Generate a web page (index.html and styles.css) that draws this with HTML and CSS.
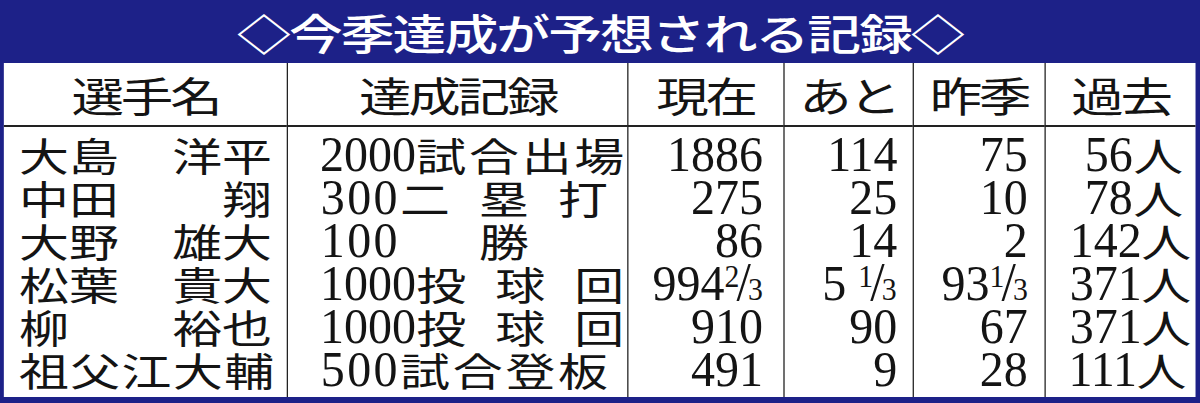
FILE: index.html
```html
<!DOCTYPE html>
<html lang="ja">
<head>
<meta charset="utf-8">
<title>今季達成が予想される記録</title>
<link rel="stylesheet" href="styles.css">
</head>
<body>
<div class="sheet">
  <div class="title">◇今季達成が予想される記録◇</div>
  <table class="tbl">
    <colgroup>
      <col class="c1"><col class="c2"><col class="c3"><col class="c4"><col class="c5"><col class="c6">
    </colgroup>
    <thead>
      <tr><th>選手名</th><th>達成記録</th><th>現在</th><th>あと</th><th>昨季</th><th>過去</th></tr>
    </thead>
    <tbody>
      <tr>
        <td><div class="nm"><span>大島</span><span>洋平</span></div></td>
        <td class="rec"><span class="n">2000</span><span class="slot"><span>試</span><span>合</span><span>出</span><span>場</span></span></td>
        <td class="num now"><span class="n">1886</span></td>
        <td class="num rest"><span class="n">114</span></td>
        <td class="num last"><span class="n">75</span></td>
        <td class="num past"><span class="n">56</span>人</td>
      </tr>
      <tr>
        <td><div class="nm"><span>中田</span><span>翔</span></div></td>
        <td class="rec"><span class="n w3">300</span><span class="slot"><span>二</span><span>塁</span><span>打</span></span></td>
        <td class="num now"><span class="n">275</span></td>
        <td class="num rest"><span class="n">25</span></td>
        <td class="num last"><span class="n">10</span></td>
        <td class="num past"><span class="n">78</span>人</td>
      </tr>
      <tr>
        <td><div class="nm"><span>大野</span><span>雄大</span></div></td>
        <td class="rec"><span class="n w3">100</span><span class="slot mid"><span>勝</span></span></td>
        <td class="num now"><span class="n">86</span></td>
        <td class="num rest"><span class="n">14</span></td>
        <td class="num last"><span class="n">2</span></td>
        <td class="num past"><span class="n">142</span>人</td>
      </tr>
      <tr>
        <td><div class="nm"><span>松葉</span><span>貴大</span></div></td>
        <td class="rec"><span class="n">1000</span><span class="slot"><span>投</span><span>球</span><span>回</span></span></td>
        <td class="num now"><span class="n frn">994<span class="fr"><span class="fu">2</span><span class="fs">/</span><span class="fd">3</span></span></span></td>
        <td class="num rest"><span class="n frn">5 <span class="fr"><span class="fu">1</span><span class="fs">/</span><span class="fd">3</span></span></span></td>
        <td class="num last"><span class="n frn">93<span class="fr"><span class="fu">1</span><span class="fs">/</span><span class="fd">3</span></span></span></td>
        <td class="num past"><span class="n">371</span>人</td>
      </tr>
      <tr>
        <td><div class="nm"><span>柳</span><span>裕也</span></div></td>
        <td class="rec"><span class="n">1000</span><span class="slot"><span>投</span><span>球</span><span>回</span></span></td>
        <td class="num now"><span class="n">910</span></td>
        <td class="num rest"><span class="n">90</span></td>
        <td class="num last"><span class="n">67</span></td>
        <td class="num past"><span class="n">371</span>人</td>
      </tr>
      <tr>
        <td><div class="nm"><span class="full">祖父江大輔</span></div></td>
        <td class="rec"><span class="n w3">500</span><span class="slot"><span>試</span><span>合</span><span>登</span><span>板</span></span></td>
        <td class="num now"><span class="n">491</span></td>
        <td class="num rest"><span class="n">9</span></td>
        <td class="num last"><span class="n">28</span></td>
        <td class="num past"><span class="n">111</span>人</td>
      </tr>
    </tbody>
  </table>
</div>
</body>
</html>
```
FILE: styles.css
```css
html, body {
  margin: 0;
  padding: 0;
}
body {
  width: 1200px;
  height: 403px;
  overflow: hidden;
  background: #1d2188;
}
/* the original graphic is stretched horizontally; draw it at its own width and stretch it */
.sheet {
  width: 937.5px;
  box-sizing: border-box;
  padding: 0 3.125px 6px;
  background: #1d2188;
  transform: scaleX(1.28);
  transform-origin: 0 0;
}
.title {
  height: 63px;
  line-height: 63px;
  text-align: center;
  color: #fff;
  font-family: "Noto Sans CJK JP", sans-serif;
  font-size: 42px;
  font-weight: 500;
  letter-spacing: -1.5px;
  white-space: nowrap;
}
.tbl {
  width: 100%;
  table-layout: fixed;
  border-collapse: separate;
  border-spacing: 0;
  background: #fff;
  color: #141414;
  font-family: "Noto Sans CJK JP", sans-serif;
}
.c1 { width: 221.1px; }
.c2 { width: 265.6px; }
.c3 { width: 121.9px; }
.c4 { width: 101.6px; }
.c5 { width: 102.3px; }
.c6 { width: 118.75px; }

th {
  height: 62px;
  padding: 0;
  font-size: 41px;
  font-weight: 400;
  letter-spacing: -2.5px;
  text-align: center;
  vertical-align: middle;
  border-bottom: 2px solid #222;
  white-space: nowrap;
}
th + th, td + td {
  border-left: 1.5px solid #222;
}
td {
  height: 43px;
  padding: 0;
  line-height: 43px;
  font-size: 39px;
  white-space: nowrap;
  vertical-align: top;
}
tbody tr:first-child td { padding-top: 6px; }
tbody tr:last-child td { padding-bottom: 6px; }

.nm {
  display: flex;
  justify-content: space-between;
  padding: 0 11.7px;
}
.nm .full {
  letter-spacing: 1.1px;
}

.n {
  display: inline-block;
  height: 43px;
  font-family: "Liberation Serif", "DejaVu Serif", serif;
  font-size: 50px;
  line-height: 43px;
  transform: scaleX(0.75);
  transform-origin: 100% 50%;
}
.n.w3 {
  letter-spacing: 2.5px;
}
/* numbers with a fraction are wider than their (pre-condense) cell; keep them right-aligned */
.n.frn {
  margin-left: -40px;
}

/* stacked fraction: small numerator up, long slash, denominator down */
.fr {
  letter-spacing: 0;
}
.fu, .fd {
  font-size: 31px;
  line-height: 0;
}
.fu {
  vertical-align: 13px;
}
.fs {
  font-size: 54px;
  line-height: 0;
  margin: 0 -3px;
}

.rec {
  text-align: right;
  padding-right: 14.8px;
}
.slot {
  display: inline-flex;
  width: 162.5px;
  justify-content: space-between;
  vertical-align: baseline;
}
.slot.mid {
  justify-content: center;
}

.num { text-align: right; }
.now { padding-right: 15.6px; }
.rest { padding-right: 12.5px; }
.last { padding-right: 12.5px; }
.past { padding-right: 10px; }
```
